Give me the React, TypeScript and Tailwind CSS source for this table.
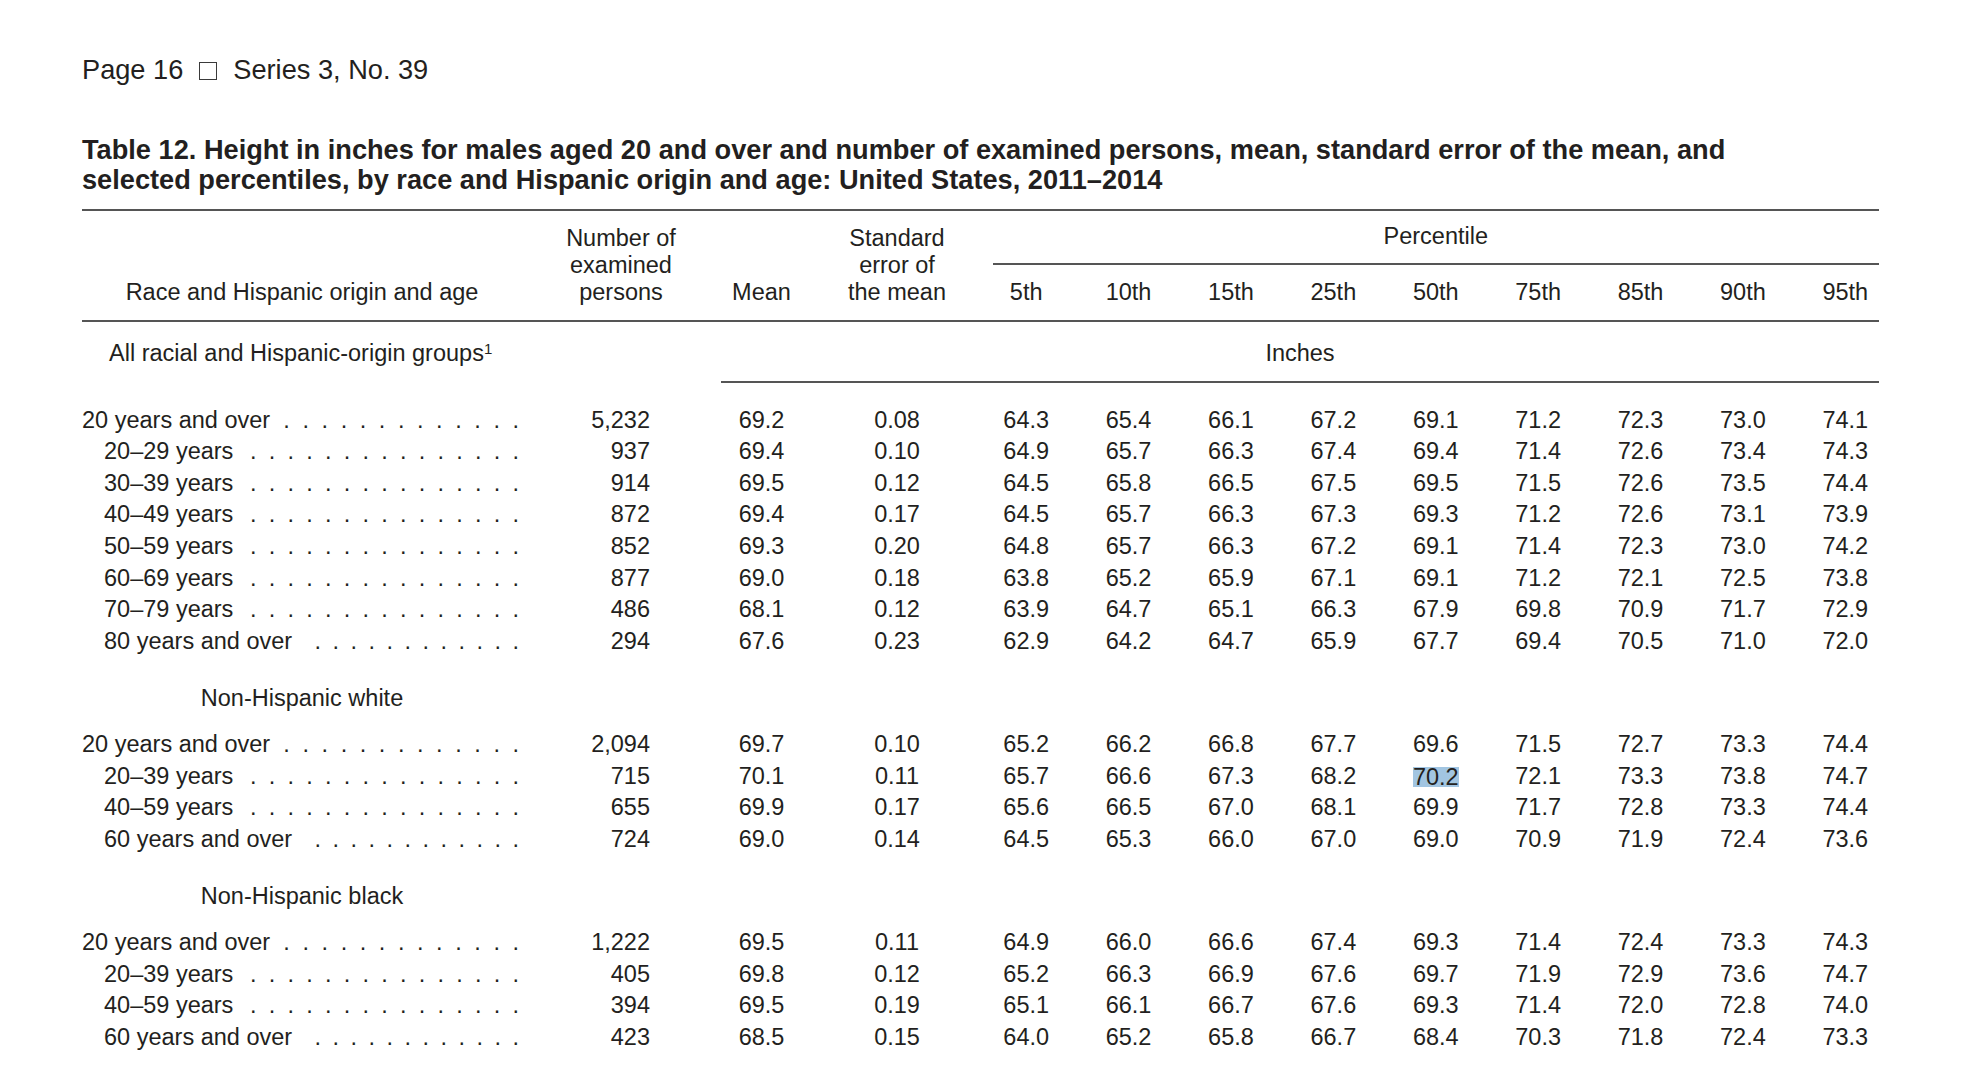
import React from "react";

type RowData = {
  label: string;
  kind: "top" | "range" | "over";
  n: string;
  mean: string;
  se: string;
  p: string[];
  hi?: number;
};

const allGroups: RowData[] = [
  { label: "20 years and over", kind: "top", n: "5,232", mean: "69.2", se: "0.08", p: ["64.3", "65.4", "66.1", "67.2", "69.1", "71.2", "72.3", "73.0", "74.1"] },
  { label: "20–29 years", kind: "range", n: "937", mean: "69.4", se: "0.10", p: ["64.9", "65.7", "66.3", "67.4", "69.4", "71.4", "72.6", "73.4", "74.3"] },
  { label: "30–39 years", kind: "range", n: "914", mean: "69.5", se: "0.12", p: ["64.5", "65.8", "66.5", "67.5", "69.5", "71.5", "72.6", "73.5", "74.4"] },
  { label: "40–49 years", kind: "range", n: "872", mean: "69.4", se: "0.17", p: ["64.5", "65.7", "66.3", "67.3", "69.3", "71.2", "72.6", "73.1", "73.9"] },
  { label: "50–59 years", kind: "range", n: "852", mean: "69.3", se: "0.20", p: ["64.8", "65.7", "66.3", "67.2", "69.1", "71.4", "72.3", "73.0", "74.2"] },
  { label: "60–69 years", kind: "range", n: "877", mean: "69.0", se: "0.18", p: ["63.8", "65.2", "65.9", "67.1", "69.1", "71.2", "72.1", "72.5", "73.8"] },
  { label: "70–79 years", kind: "range", n: "486", mean: "68.1", se: "0.12", p: ["63.9", "64.7", "65.1", "66.3", "67.9", "69.8", "70.9", "71.7", "72.9"] },
  { label: "80 years and over", kind: "over", n: "294", mean: "67.6", se: "0.23", p: ["62.9", "64.2", "64.7", "65.9", "67.7", "69.4", "70.5", "71.0", "72.0"] },
];

const white: RowData[] = [
  { label: "20 years and over", kind: "top", n: "2,094", mean: "69.7", se: "0.10", p: ["65.2", "66.2", "66.8", "67.7", "69.6", "71.5", "72.7", "73.3", "74.4"] },
  { label: "20–39 years", kind: "range", n: "715", mean: "70.1", se: "0.11", p: ["65.7", "66.6", "67.3", "68.2", "70.2", "72.1", "73.3", "73.8", "74.7"], hi: 4 },
  { label: "40–59 years", kind: "range", n: "655", mean: "69.9", se: "0.17", p: ["65.6", "66.5", "67.0", "68.1", "69.9", "71.7", "72.8", "73.3", "74.4"] },
  { label: "60 years and over", kind: "over", n: "724", mean: "69.0", se: "0.14", p: ["64.5", "65.3", "66.0", "67.0", "69.0", "70.9", "71.9", "72.4", "73.6"] },
];

const black: RowData[] = [
  { label: "20 years and over", kind: "top", n: "1,222", mean: "69.5", se: "0.11", p: ["64.9", "66.0", "66.6", "67.4", "69.3", "71.4", "72.4", "73.3", "74.3"] },
  { label: "20–39 years", kind: "range", n: "405", mean: "69.8", se: "0.12", p: ["65.2", "66.3", "66.9", "67.6", "69.7", "71.9", "72.9", "73.6", "74.7"] },
  { label: "40–59 years", kind: "range", n: "394", mean: "69.5", se: "0.19", p: ["65.1", "66.1", "66.7", "67.6", "69.3", "71.4", "72.0", "72.8", "74.0"] },
  { label: "60 years and over", kind: "over", n: "423", mean: "68.5", se: "0.15", p: ["64.0", "65.2", "65.8", "66.7", "68.4", "70.3", "71.8", "72.4", "73.3"] },
];

const pctLabels = ["5th", "10th", "15th", "25th", "50th", "75th", "85th", "90th", "95th"];

function Rule({ className }: { className?: string }) {
  return <div className={"h-[2px] bg-[#555555] " + (className ?? "")} />;
}

function Dots({ kind }: { kind: RowData["kind"] }) {
  if (kind === "top") {
    return (
      <span className="flex mr-[3px]">
        {Array.from({ length: 13 }).map((_, i) => (
          <span key={i} className="w-[19.1px] text-right">.</span>
        ))}
      </span>
    );
  }
  if (kind === "range") {
    return (
      <span className="flex mr-[3px]">
        {Array.from({ length: 15 }).map((_, i) => (
          <span key={i} className="w-[18.75px] text-right">.</span>
        ))}
      </span>
    );
  }
  return (
    <span className="flex mr-[3px]">
      {Array.from({ length: 12 }).map((_, i) => (
        <span key={i} className="w-[18px] text-right">.</span>
      ))}
    </span>
  );
}

function Row({ r }: { r: RowData }) {
  return (
    <div className="grid grid-cols-[440px_198px_83px_172px_repeat(9,102.4px)] h-[31.6px] leading-[31.6px] whitespace-nowrap">
      <div className={r.kind === "top" ? "flex" : "flex pl-[22px]"}>
        <span>{r.label}</span>
        <span className="flex-1" />
        <Dots kind={r.kind} />
      </div>
      <div className="text-right pr-[70px]">{r.n}</div>
      <div className="text-center">{r.mean}</div>
      <div className="text-center pl-[16px]">{r.se}</div>
      {r.p.map((v, i) => (
        <div key={i} className="text-center">
          {r.hi === i ? (
            <span className="bg-[#a2c5e1] inline-block leading-[20px] relative top-[1px]">{v}</span>
          ) : (
            v
          )}
        </div>
      ))}
    </div>
  );
}

function SectionHeading({ text }: { text: string }) {
  return (
    <div className="mt-[26px] mb-[14px] w-[440px] text-center leading-[31.6px]">{text}</div>
  );
}

export default function App() {
  return (
    <div className="min-h-[1081px] w-[1984px] bg-white text-[#231f20] font-['Liberation_Sans',Arial,Helvetica,sans-serif] pl-[82px] pt-[55px]">
      <div className="flex items-center h-[30px] text-[27.2px] leading-[30px] whitespace-nowrap">
        <span>Page 16</span>
        <span className="mx-[16px] w-[18px] h-[18px] border-[1.5px] border-[#3a3a3a] translate-y-[1px]" />
        <span>Series 3, No. 39</span>
      </div>

      <div className="mt-[50px] text-[27.2px] leading-[30px] font-bold whitespace-nowrap">
        Table 12. Height in inches for males aged 20 and over and number of examined persons, mean, standard error of the mean, and
        <br />
        selected percentiles, by race and Hispanic origin and age: United States, 2011–2014
      </div>

      <div className="w-[1797px] mt-[14px] text-[23.5px]">
        <Rule />
        <div className="grid grid-cols-[440px_198px_83px_172px_repeat(9,102.4px)] items-end pt-[14px] pb-[14px] leading-[27px] whitespace-nowrap">
          <div className="text-center">Race and Hispanic origin and age</div>
          <div className="text-center">
            Number of
            <br />
            examined
            <br />
            persons
          </div>
          <div className="text-center">Mean</div>
          <div className="text-center pl-[16px]">
            Standard
            <br />
            error of
            <br />
            the mean
          </div>
          <div className="col-span-9 flex flex-col">
            <div className="text-center relative -top-[2px]">Percentile</div>
            <Rule className="mt-[11px] ml-[18px] w-[886px]" />
            <div className="mt-[14px] grid grid-cols-[repeat(9,102.4px)]">
              {pctLabels.map((l) => (
                <div key={l} className="text-center">{l}</div>
              ))}
            </div>
          </div>
        </div>
        <Rule />

        <div className="flex pt-[16px] whitespace-nowrap">
          <div className="w-[639px] pl-[27px] leading-[31.6px]">
            All racial and Hispanic-origin groups<sup className="text-[15px]">1</sup>
          </div>
          <div className="w-[1158px] flex flex-col">
            <div className="text-center leading-[31.6px]">Inches</div>
            <Rule className="mt-[11px]" />
          </div>
        </div>

        <div className="mt-[22px]">
          {allGroups.map((r, i) => (
            <Row key={i} r={r} />
          ))}
          <SectionHeading text="Non-Hispanic white" />
          {white.map((r, i) => (
            <Row key={i} r={r} />
          ))}
          <SectionHeading text="Non-Hispanic black" />
          {black.map((r, i) => (
            <Row key={i} r={r} />
          ))}
        </div>
      </div>
    </div>
  );
}
